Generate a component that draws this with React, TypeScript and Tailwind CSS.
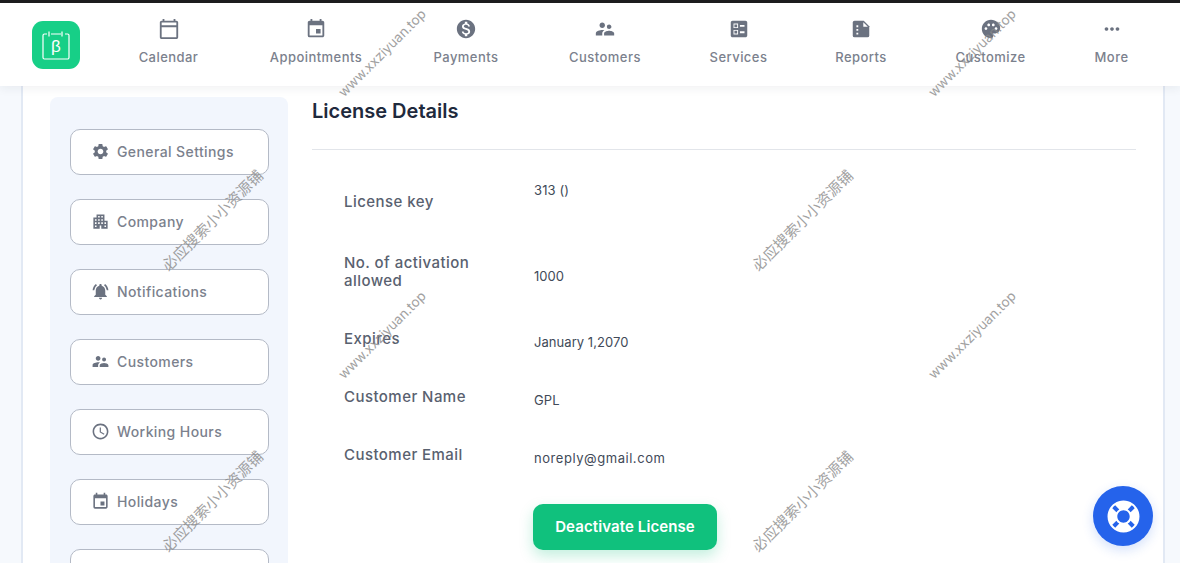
import React from "react";
import {
  MdOutlineCalendarToday,
  MdEvent,
  MdMonetizationOn,
  MdSupervisorAccount,
  MdBallot,
  MdPalette,
  MdMoreHoriz,
  MdSettings,
  MdApartment,
  MdNotificationsActive,
  MdAccessTime,
} from "react-icons/md";
import { FaLifeRing } from "react-icons/fa";

function ReportIcon({ className, size }: { className?: string; size?: number }) {
  return (
    <svg className={className} width={size} height={size} viewBox="0 0 24 24">
      <path fill="currentColor" d="M5 3h10l6 6v10a2 2 0 0 1-2 2H5a2 2 0 0 1-2-2V5a2 2 0 0 1 2-2z" />
      <path fill="white" d="M14.500 4.500V9.500H19.500zM7 8h2v2H7zM7 12h2v2H7zM7 16h2v2H7z" />
    </svg>
  );
}

const nav = [
  { label: "Calendar", Icon: MdOutlineCalendarToday, w: "w-[131px]" },
  { label: "Appointments", Icon: MdEvent, w: "w-[164px]" },
  { label: "Payments", Icon: MdMonetizationOn, w: "w-[136px]" },
  { label: "Customers", Icon: MdSupervisorAccount, w: "w-[142px]" },
  { label: "Services", Icon: MdBallot, w: "w-[125px]" },
  { label: "Reports", Icon: ReportIcon, w: "w-[120px]" },
  { label: "Customize", Icon: MdPalette, w: "w-[139px]" },
  { label: "More", Icon: MdMoreHoriz, w: "w-[103px]" },
];

const side = [
  { label: "General Settings", Icon: MdSettings },
  { label: "Company", Icon: MdApartment },
  { label: "Notifications", Icon: MdNotificationsActive },
  { label: "Customers", Icon: MdSupervisorAccount },
  { label: "Working Hours", Icon: MdAccessTime },
  { label: "Holidays", Icon: MdEvent },
  { label: "", Icon: null },
];

const marks = [
  { t: "www.xxziyuan.top", c: "left-[382px] top-[53px]" },
  { t: "www.xxziyuan.top", c: "left-[972px] top-[53px]" },
  { t: "www.xxziyuan.top", c: "left-[382px] top-[335px]" },
  { t: "www.xxziyuan.top", c: "left-[972px] top-[335px]" },
  { t: "必应搜索小小资源铺", c: "left-[213px] top-[221px]" },
  { t: "必应搜索小小资源铺", c: "left-[803px] top-[221px]" },
  { t: "必应搜索小小资源铺", c: "left-[213px] top-[502px]" },
  { t: "必应搜索小小资源铺", c: "left-[803px] top-[502px]" },
];

function Row({ label, value, h, lt, vt, vs }: { label: React.ReactNode; value: string; h: string; lt: string; vt: string; vs: string }) {
  return (
    <div className={`flex ${h}`}>
      <div className={`w-[222px] pl-[32px] pr-[40px] text-[15px] leading-[18px] font-medium tracking-[0.45px] text-[#59616f] ${lt}`}>{label}</div>
      <div className={`text-[13px] leading-[20px] text-[#414a58] ${vs} ${vt}`}>{value}</div>
    </div>
  );
}

export default function App() {
  return (
    <div className="relative h-[563px] w-[1180px] overflow-hidden bg-[#f6f9fd] font-['Inter','Noto_Sans_CJK_SC',sans-serif]">
      <header className="relative z-10 flex h-[86px] items-start border-t-[3px] border-[#1c1c1e] bg-white pl-[32px] shadow-[0_2px_10px_rgba(30,41,59,0.07)]">
        <div className="mt-[18px] flex h-[48px] w-[48px] items-center justify-center rounded-[11px] bg-[#17cf87]">
          <svg width="30" height="32" viewBox="0 0 30 32" fill="none" stroke="white" strokeWidth="1.2">
            <path d="M6 5H3.500a1.500 1.500 0 0 0-1.500 1.500v22A1.500 1.500 0 0 0 3.500 30h23a1.500 1.500 0 0 0 1.500-1.500v-22A1.500 1.500 0 0 0 26.500 5H24M10 5h10M8 2.500v5M21 2.500v5" />
            <text x="15" y="23" textAnchor="middle" fontSize="17" fill="white" stroke="none" fontFamily="Liberation Sans">β</text>
          </svg>
        </div>
        <nav className="ml-[23px] flex">
          {nav.map(({ label, Icon, w }) => (
            <div key={label} className={`flex flex-col items-center pt-[15px] ${w}`}>
              <Icon className="text-[#6b7280]" size={22} />
              <span className="mt-[7px] text-[13px] leading-[20px] font-medium tracking-[0.45px] text-[#7b818d]">{label}</span>
            </div>
          ))}
        </nav>
      </header>

      <main className="h-[477px] pl-[21px] pr-[15px] pt-0">
        <div className="flex h-full gap-[24px] border-x-2 border-[#e2e9f4] bg-white pl-[27px] pr-[27px] pt-[11px]">
          <aside className="flex w-[238px] shrink-0 flex-col gap-[24px] rounded-t-[8px] bg-[#f2f6fd] px-[20px] pt-[32px]">
            {side.map(({ label, Icon }, i) => (
              <div key={i} className="flex h-[46px] w-[199px] shrink-0 items-center gap-[7px] rounded-[10px] border border-[#b4bac6] bg-white pb-[1px] pl-[20px]">
                {Icon && <Icon className="text-[#6b7280]" size={19} />}
                <span className="pb-[1px] text-[14px] font-medium tracking-[0.4px] text-[#7b818d]">{label}</span>
              </div>
            ))}
          </aside>
          <section className="flex-1">
            <div className="border-b border-[#e2e5ea] pb-[25px] pt-[1px] text-[20px] leading-[26px] font-semibold text-[#1f2a3d]">License Details</div>
            <Row label="License key" value="313 ()" h="h-[75px]" lt="pt-[43px]" vt="pt-[30px]" vs="tracking-[0.1px]" />
            <Row label={<>No. of activation<br />allowed</>} value="1000" h="h-[75px]" lt="pt-[29px]" vt="pt-[41px]" vs="tracking-[0px]" />
            <Row label="Expires" value="January 1,2070" h="h-[58px]" lt="pt-[30px]" vt="pt-[32px]" vs="tracking-[0.05px]" />
            <Row label="Customer Name" value="GPL" h="h-[58px]" lt="pt-[30px]" vt="pt-[32px]" vs="tracking-[0.1px]" />
            <Row label="Customer Email" value="noreply@gmail.com" h="h-[60px]" lt="pt-[30px]" vt="pt-[32px]" vs="tracking-[0.55px]" />
            <div className="ml-[221px] mt-[28px] flex h-[46px] w-[184px] items-center justify-center rounded-[10px] bg-[#10c17d] text-[15px] font-semibold tracking-[0.1px] text-white shadow-[0_6px_14px_rgba(16,193,125,0.25)]">
              Deactivate License
            </div>
          </section>
        </div>
      </main>

      <div className="absolute left-[1093px] top-[486px] z-20 flex h-[60px] w-[60px] items-center justify-center rounded-full bg-[#2563eb] shadow-[0_4px_12px_rgba(37,99,235,0.2)]">
        <FaLifeRing className="text-white" size={33} />
      </div>

      {marks.map((m, i) => (
        <div key={i} className={`pointer-events-none absolute z-30 h-0 w-0 ${m.c}`}>
          <span className={`absolute left-0 top-0 -translate-x-1/2 -translate-y-1/2 -rotate-45 whitespace-nowrap text-[#8a8a8a] opacity-80 ${i < 4 ? "text-[13.5px]" : "text-[15px]"}`}>{m.t}</span>
        </div>
      ))}
    </div>
  );
}
